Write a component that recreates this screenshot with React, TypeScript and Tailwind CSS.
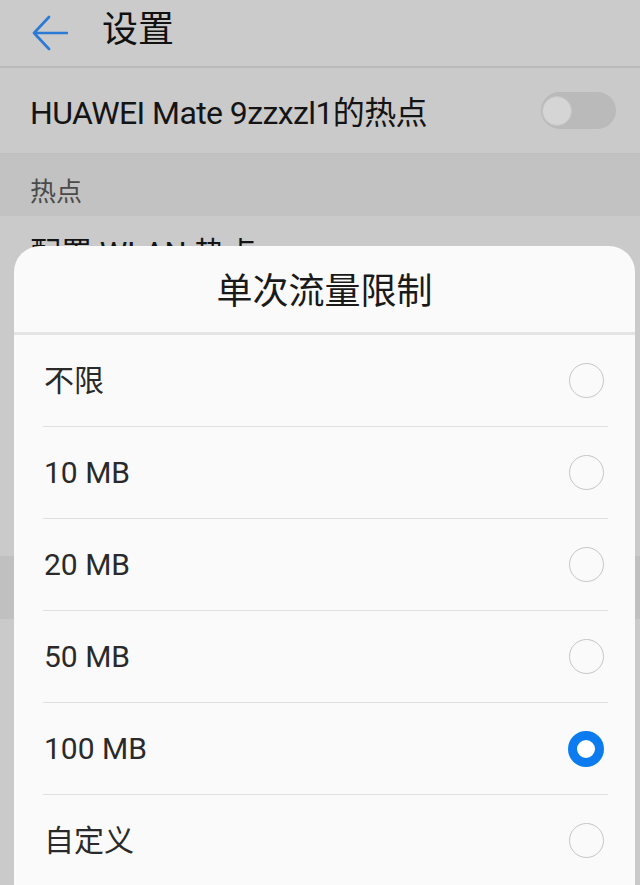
import React from "react";

const font = { fontFamily: '"Roboto", "Noto Sans CJK SC", sans-serif' };

const options = ["不限", "10 MB", "20 MB", "50 MB", "100 MB", "自定义"];
const selected = 4;

function BackArrow() {
  return (
    <svg width="36" height="36" viewBox="0 0 36 36" fill="none">
      <path
        d="M17 2 L2 18 L17 34 M2 18 H35"
        stroke="#2a7ad6"
        strokeWidth="2.6"
        strokeLinecap="round"
        strokeLinejoin="round"
      />
    </svg>
  );
}

function Radio({ on }: { on: boolean }) {
  return on ? (
    <div className="w-9 h-9 rounded-full border-[9px] border-[#0b7bef] bg-white" />
  ) : (
    <div className="w-[35px] h-[35px] rounded-full border-[1.5px] border-[#c6c6c6]" />
  );
}

export default function App() {
  return (
    <div className="relative w-[640px] h-[885px] overflow-hidden bg-[#cacaca]" style={font}>
      {/* top bar */}
      <div className="h-[68px] bg-[#cbcbcb] flex items-center pl-[32px] gap-[34px] border-b-[2px] border-[#b9b9b9]">
        <BackArrow />
        <span className="text-[36px] text-[#111] leading-none -mt-[6px]">设置</span>
      </div>

      {/* hotspot switch row */}
      <div className="h-[86px] flex items-center justify-between pl-[30px] pr-[24px] border-b border-[#bebebe]">
        <span className="text-[32px] text-[#141414] leading-none tracking-[-0.6px] mt-[5px]">HUAWEI Mate 9zzxzl1的热点</span>
        <div className="relative w-[75px] h-[37px] rounded-full bg-[#bababa] flex items-center pl-[1px]">
          <div className="w-[30px] h-[30px] rounded-full bg-[#d5d5d5] border border-[#c6c6c6]" />
        </div>
      </div>

      {/* section header */}
      <div className="h-[62px] bg-[#c2c2c2] flex items-center pl-[30px]">
        <span className="text-[26px] text-[#4a4a4a] leading-none mt-[14px]">热点</span>
      </div>

      {/* rows beneath the sheet */}
      <div className="h-[92px] flex items-start pl-[30px] pt-[22px]">
        <span className="text-[31px] text-[#141414] leading-none">配置 WLAN 热点</span>
      </div>
      <div className="h-[124px]" />
      <div className="h-[124px]" />
      <div className="h-[63px] bg-[#c0c0c0]" />
      <div className="h-[92px]" />

      {/* bottom sheet */}
      <div className="absolute left-[14px] top-[246px] w-[621px] h-[660px] bg-[#fafafa] rounded-t-[26px]">
        <div className="h-[86px] flex items-center justify-center">
          <span className="text-[36px] text-[#1a1a1a] leading-none mt-[6px]">单次流量限制</span>
        </div>
        <div className="h-[3px] bg-[#e4e4e4]" />
        <div className="flex flex-col">
          {options.map((label, i) => (
            <div key={label} className="flex flex-col">
              <div className="h-[91px] flex items-center justify-between pl-[30px] pr-[31px]">
                <span className="text-[30px] text-[#2a2a2a] leading-none">{label}</span>
                <Radio on={i === selected} />
              </div>
              {i < options.length - 1 && <div className="ml-[29px] mr-[27px] h-px bg-[#e0e0e0]" />}
            </div>
          ))}
        </div>
      </div>
    </div>
  );
}
